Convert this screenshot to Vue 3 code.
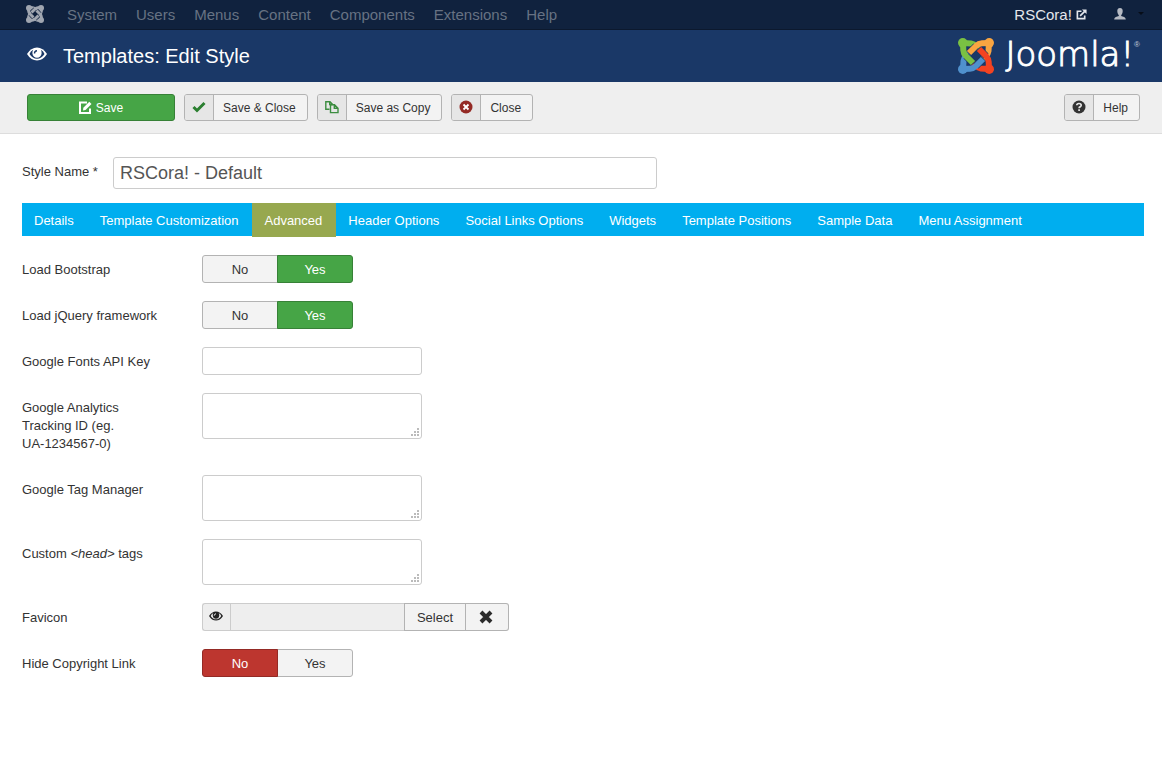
<script setup>
import { ref } from 'vue'

const menu = ['System', 'Users', 'Menus', 'Content', 'Components', 'Extensions', 'Help']
const tabs = [
  'Details', 'Template Customization', 'Advanced', 'Header Options', 'Social Links Options',
  'Widgets', 'Template Positions', 'Sample Data', 'Menu Assignment'
]
const activeTab = ref('Advanced')
const styleName = ref('RSCora! - Default')
const bootstrap = ref('Yes')
const jquery = ref('Yes')
const copyright = ref('No')
const logoArms = [
  { angle: 0, cls: 'green' },
  { angle: 90, cls: 'orange' },
  { angle: 180, cls: 'red' },
  { angle: 270, cls: 'blue' }
]
</script>

<template>
  <div class="page">
    <nav class="topbar">
      <a href="#" class="mark" aria-label="Joomla">
        <svg viewBox="0 0 36 36" width="18" height="18">
          <g v-for="a in logoArms" :key="'s' + a.angle" :transform="`rotate(${a.angle} 18 18)`" class="arm mono">
            <circle cx="6" cy="6" r="6" />
            <path d="M5 5L13 5.500Q16 6 18 8L20.500 10.500" />
          </g>
          <g v-for="a in logoArms" :key="'l' + a.angle" :transform="`rotate(${a.angle} 18 18)`">
            <path class="gap top" d="M8 18L14.500 24.500" />
            <path class="arm mono" d="M5 5L5.300 12Q5.500 15.500 8 18L15 25" />
          </g>
        </svg>
      </a>
      <a v-for="m in menu" :key="m" href="#" class="item">{{ m }}</a>
      <span class="spacer"></span>
      <a href="#" class="site">RSCora!
        <svg viewBox="0 0 12 12" width="11" height="11" fill="none" stroke="currentColor" stroke-width="1.800">
          <path d="M6 2.500H1.500V10.500H9.500V7M4.500 7.500L9.500 2.500" />
          <path d="M6.500 .5H11.500V5.500Z" fill="currentColor" stroke="none" />
        </svg>
      </a>
      <button class="user" aria-label="User menu">
        <svg viewBox="0 0 12 12" width="12" height="12">
          <path fill="#b5bac3" d="M6 0C3.900 0 3.200 1.500 3.300 3.200C3.400 5 4 6.300 4.800 7V8C3 8.600 .3 9 .2 11.500H11.800C11.700 9 9 8.600 7.200 8V7C8 6.300 8.600 5 8.700 3.200C8.800 1.500 8.100 0 6 0Z" />
        </svg>
        <span class="caret"></span>
      </button>
    </nav>

    <header class="header">
      <svg class="eye" viewBox="0 0 20 14" width="20" height="14">
        <path fill="#fff" d="M0 7Q4 .5 10 .5T20 7Q16 13.500 10 13.500T0 7Z" />
        <path fill="#1a3867" d="M2.500 7Q3.500 4.300 6.200 2.800Q5.200 4.500 5.400 6.500Q6 10.500 10 10.800Q14 10.500 14.600 6.500Q14.800 4.500 13.800 2.800Q16.500 4.300 17.500 7Q14.500 11.800 10 11.800T2.500 7Z" />
        <path d="M7.500 6.500Q7.500 4 10 3.800" fill="none" stroke="#1a3867" stroke-width="1.400" />
      </svg>
      <h1>Templates: Edit Style</h1>
      <div class="logo">
        <svg viewBox="0 0 36 36" width="36" height="36">
          <g v-for="a in logoArms" :key="'s' + a.angle" :transform="`rotate(${a.angle} 18 18)`" class="arm" :class="a.cls">
            <circle cx="4.800" cy="4.800" r="4.800" />
            <path d="M5 5L13 5.500Q16 6 18 8L20.500 10.500" />
          </g>
          <g v-for="a in logoArms" :key="'l' + a.angle" :transform="`rotate(${a.angle} 18 18)`">
            <path class="gap" d="M8 18L14.500 24.500" />
            <path class="arm" :class="a.cls" d="M5 5L5.300 12Q5.500 15.500 8 18L15 25" />
          </g>
        </svg>
        <span class="word">Joomla!</span><span class="reg">®</span>
      </div>
    </header>

    <div class="toolbar">
      <button class="btn save">
        <svg viewBox="0 0 13 13" width="13" height="13">
          <path d="M8 1.500H1V12H11V7.500" fill="none" stroke="#fff" stroke-width="2" />
          <path d="M4 9.500L4.300 6.800L10.300 .8L12.500 3L6.500 9.100Z" fill="#fff" />
        </svg>
        Save
      </button>
      <button class="btn tool">
        <span class="ico"><svg viewBox="0 0 14 12" width="14" height="12"><path d="M1.500 6L5 9.500L12.500 2" fill="none" stroke="#2b7f30" stroke-width="3" /></svg></span>
        <span class="txt">Save &amp; Close</span>
      </button>
      <button class="btn tool">
        <span class="ico"><svg viewBox="0 0 14 14" width="14" height="14" fill="none" stroke="#3c8d40" stroke-width="1.400"><path d="M4.500 9.300H.8V1.700H5L7.500 4.200V5M4.700 1.700V4.500H7.500" /><path d="M5.500 4.700H9.500L13 8.200V12.600H5.500ZM9.300 4.700V8.300H13" /></svg></span>
        <span class="txt">Save as Copy</span>
      </button>
      <button class="btn tool">
        <span class="ico"><svg viewBox="0 0 14 14" width="14" height="14"><circle cx="7" cy="7" r="6.500" fill="#942a25" /><path d="M4.500 4.500L9.500 9.500M9.500 4.500L4.500 9.500" stroke="#fff" stroke-width="1.800" /></svg></span>
        <span class="txt">Close</span>
      </button>
      <span class="spacer"></span>
      <button class="btn tool">
        <span class="ico"><svg viewBox="0 0 14 14" width="14" height="14"><circle cx="7" cy="7" r="6.500" fill="#333" /><path d="M4.800 5.300Q4.800 3.500 7 3.500T9.200 5.300Q9.200 6.300 8 6.900Q7.100 7.300 7.100 8.300M7.100 9.300V11" fill="none" stroke="#e6e6e6" stroke-width="1.700" /></svg></span>
        <span class="txt">Help</span>
      </button>
    </div>

    <main class="content">
      <div class="title-row">
        <label for="style-name">Style Name *</label>
        <input id="style-name" v-model="styleName" type="text" />
      </div>

      <div class="tabs" role="tablist">
        <button
          v-for="t in tabs" :key="t" role="tab" :aria-selected="activeTab === t"
          :class="{ active: activeTab === t }" @click="activeTab = t"
        >{{ t }}</button>
      </div>

      <form class="form" @submit.prevent>
        <div class="row" role="radiogroup" aria-labelledby="l-bootstrap">
          <span id="l-bootstrap" class="label">Load Bootstrap</span>
          <div class="toggle">
            <label><input v-model="bootstrap" type="radio" name="bootstrap" value="No" /><span class="no">No</span></label>
            <label><input v-model="bootstrap" type="radio" name="bootstrap" value="Yes" /><span class="yes">Yes</span></label>
          </div>
        </div>
        <div class="row" role="radiogroup" aria-labelledby="l-jquery">
          <span id="l-jquery" class="label">Load jQuery framework</span>
          <div class="toggle">
            <label><input v-model="jquery" type="radio" name="jquery" value="No" /><span class="no">No</span></label>
            <label><input v-model="jquery" type="radio" name="jquery" value="Yes" /><span class="yes">Yes</span></label>
          </div>
        </div>
        <div class="row">
          <label class="label" for="fonts-key">Google Fonts API Key</label>
          <input id="fonts-key" class="field" type="text" />
        </div>
        <div class="row">
          <label class="label" for="analytics">Google Analytics Tracking ID (eg. <span class="nowrap">UA-1234567-0)</span></label>
          <div class="area">
            <textarea id="analytics" class="field"></textarea>
            <svg class="grip" viewBox="0 0 8 8" width="8" height="8"><path d="M6 0h2v2h-2zM3 3h2v2h-2zM6 3h2v2h-2zM0 6h2v2h-2zM3 6h2v2h-2zM6 6h2v2h-2z" /></svg>
          </div>
        </div>
        <div class="row">
          <label class="label" for="tag-manager">Google Tag Manager</label>
          <div class="area">
            <textarea id="tag-manager" class="field"></textarea>
            <svg class="grip" viewBox="0 0 8 8" width="8" height="8"><path d="M6 0h2v2h-2zM3 3h2v2h-2zM6 3h2v2h-2zM0 6h2v2h-2zM3 6h2v2h-2zM6 6h2v2h-2z" /></svg>
          </div>
        </div>
        <div class="row">
          <label class="label" for="head-tags">Custom <em>&lt;head&gt;</em> tags</label>
          <div class="area">
            <textarea id="head-tags" class="field"></textarea>
            <svg class="grip" viewBox="0 0 8 8" width="8" height="8"><path d="M6 0h2v2h-2zM3 3h2v2h-2zM6 3h2v2h-2zM0 6h2v2h-2zM3 6h2v2h-2zM6 6h2v2h-2z" /></svg>
          </div>
        </div>
        <div class="row">
          <label class="label" for="favicon">Favicon</label>
          <div class="media">
            <span class="addon">
              <svg viewBox="0 0 20 14" width="14" height="10">
                <path fill="#222" d="M0 7Q4 .5 10 .5T20 7Q16 13.500 10 13.500T0 7Z" />
                <path fill="#eee" d="M2.500 7Q3.500 4.300 6.200 2.800Q5.200 4.500 5.400 6.500Q6 10.500 10 10.800Q14 10.500 14.600 6.500Q14.800 4.500 13.800 2.800Q16.500 4.300 17.500 7Q14.500 11.800 10 11.800T2.500 7Z" />
                <path d="M7.500 6.500Q7.500 4 10 3.800" fill="none" stroke="#eee" stroke-width="1.400" />
              </svg>
            </span>
            <input id="favicon" type="text" readonly />
            <button type="button" class="select">Select</button>
            <button type="button" class="clear" aria-label="Clear">
              <svg viewBox="0 0 14 14" width="14" height="14"><path d="M2 2L12 12M12 2L2 12" stroke="#2b2b2b" stroke-width="4" /></svg>
            </button>
          </div>
        </div>
        <div class="row" role="radiogroup" aria-labelledby="l-copyright">
          <span id="l-copyright" class="label">Hide Copyright Link</span>
          <div class="toggle">
            <label><input v-model="copyright" type="radio" name="copyright" value="No" /><span class="no danger">No</span></label>
            <label><input v-model="copyright" type="radio" name="copyright" value="Yes" /><span class="yes">Yes</span></label>
          </div>
        </div>
      </form>
    </main>
  </div>
</template>

<style>
body {
  margin: 0;
  background: #fff;
}
</style>

<style scoped>
* {
  box-sizing: border-box;
}
.page {
  font: 13px/18px "Liberation Sans", Arial, sans-serif;
  color: #333;
}
button,
input,
textarea {
  font: inherit;
  color: inherit;
  margin: 0;
}
a {
  text-decoration: none;
}
.nowrap {
  white-space: nowrap;
}
.spacer {
  flex: 1;
}
.topbar {
  display: flex;
  align-items: center;
  gap: 19px;
  height: 30px;
  padding: 0 18px 0 26px;
  background: #10223e;
  border-bottom: 1px solid #0c192e;
  font-size: 15px;
}
.mark {
  display: flex;
  width: 22px;
  padding-bottom: 2px;
}
.item {
  color: #677283;
}
.site {
  color: #e4e7ec;
}
.user {
  display: flex;
  align-items: center;
  gap: 12px;
  padding: 0 0 2px;
  margin-left: 8px;
  border: 0;
  background: none;
}
.caret {
  border: 3px solid transparent;
  border-top-color: #060d18;
  border-bottom: 0;
}
.header {
  display: flex;
  align-items: center;
  height: 52px;
  padding: 0 22px 0 27px;
  background: #1a3867;
  color: #fff;
}
.eye {
  margin-bottom: 4px;
}
h1 {
  flex: 1;
  margin: 0 0 0 16px;
  font-size: 20px;
  line-height: 36px;
  font-weight: 400;
}
.logo {
  display: flex;
  align-items: center;
}
.word {
  margin-left: 11px;
  padding-bottom: 4px;
  font: 200 34px/36px "DejaVu Sans", sans-serif;
  -webkit-text-stroke: 1px #fff;
}
.reg {
  align-self: flex-start;
  font-size: 8px;
  color: #c3ccda;
}
.arm path,
path.arm {
  fill: none;
  stroke-width: 6;
}
.green { stroke: #7ac143; fill: #7ac143; }
.orange { stroke: #f9a541; fill: #f9a541; }
.red { stroke: #f44321; fill: #f44321; }
.blue { stroke: #5091cd; fill: #5091cd; }
.mono { stroke: #a0a6b0; fill: #a0a6b0; }
.arm circle { stroke: none; }
.gap {
  fill: none;
  stroke: #1a3867;
  stroke-width: 7;
}
.gap.top {
  stroke: #10223e;
  stroke-width: 8;
}
.toolbar {
  display: flex;
  gap: 9px;
  height: 52px;
  padding: 12px 22px 12px 27px;
  background: #efefef;
  border-bottom: 1px solid #ddd;
}
.btn {
  display: flex;
  align-items: center;
  height: 27px;
  padding: 0;
  border: 1px solid #b3b3b3;
  border-radius: 3px;
  background: #f3f3f3;
  font-size: 12px;
  overflow: hidden;
}
.save {
  justify-content: center;
  gap: 4px;
  width: 148px;
  background: #46a546;
  border-color: #378137;
  color: #fff;
}
.ico {
  display: flex;
  align-items: center;
  justify-content: center;
  align-self: stretch;
  width: 29px;
  padding-bottom: 2px;
  background: #e6e6e6;
  border-right: 1px solid #b3b3b3;
}
.txt {
  padding: 0 11px 0 9px;
}
.content {
  padding: 23px 18px 20px 22px;
}
.title-row {
  display: flex;
  gap: 14px;
  margin-bottom: 14px;
}
.title-row label {
  width: 77px;
  padding-top: 6px;
  white-space: nowrap;
}
.title-row input {
  width: 544px;
  height: 32px;
  padding: 4px 6px;
  border: 1px solid #ccc;
  border-radius: 3px;
  font-size: 18px;
  color: #555;
}
.tabs {
  display: flex;
  height: 33px;
  background: #00aeef;
}
.tabs button {
  height: 34px;
  padding: 1px 14px 0 12px;
  border: 0;
  background: none;
  color: #fff;
  white-space: nowrap;
}
.tabs .active {
  background: #97a84f;
}
.form {
  display: flex;
  flex-direction: column;
  gap: 18px;
  padding-top: 19px;
}
.row {
  display: flex;
  align-items: flex-start;
  gap: 40px;
}
.label {
  width: 140px;
  padding: 6px 0 4px;
}
.toggle {
  display: flex;
}
.toggle label {
  position: relative;
}
.toggle input {
  position: absolute;
  opacity: 0;
}
.toggle span {
  display: block;
  width: 76px;
  height: 28px;
  border: 1px solid #b3b3b3;
  background: #f3f3f3;
  line-height: 28px;
  text-align: center;
}
.toggle .no {
  border-radius: 3px 0 0 3px;
}
.toggle .yes {
  margin-left: -1px;
  border-radius: 0 3px 3px 0;
}
.toggle input:checked + span {
  position: relative;
  background: #46a546;
  border-color: #378137;
  color: #fff;
}
.toggle input:checked + .danger {
  z-index: 1;
  background: #bd362f;
  border-color: #942a25;
}
.field {
  display: block;
  width: 220px;
  height: 28px;
  padding: 4px 6px;
  border: 1px solid #ccc;
  border-radius: 3px;
  background: #fff;
}
.area {
  position: relative;
}
textarea.field {
  height: 46px;
  resize: none;
}
.grip {
  position: absolute;
  right: 3px;
  bottom: 3px;
  fill: #bbb;
}
.media {
  display: flex;
  height: 28px;
}
.addon {
  display: flex;
  align-items: center;
  justify-content: center;
  width: 28px;
  padding: 0 2px 2px 0;
  border: 1px solid #ccc;
  border-right: 0;
  border-radius: 3px 0 0 3px;
  background: #eee;
}
.media input {
  width: 174px;
  border: 1px solid #ccc;
  border-right: 0;
  border-radius: 0;
  background: #eee;
}
.media button {
  border: 1px solid #b3b3b3;
  background: #f3f3f3;
  padding: 1px 0 0;
}
.select {
  width: 62px;
}
.media .clear {
  display: flex;
  align-items: center;
  justify-content: center;
  width: 43px;
  padding: 0 3px 1px 0;
  border-left: 0;
  border-radius: 0 3px 3px 0;
}
</style>
